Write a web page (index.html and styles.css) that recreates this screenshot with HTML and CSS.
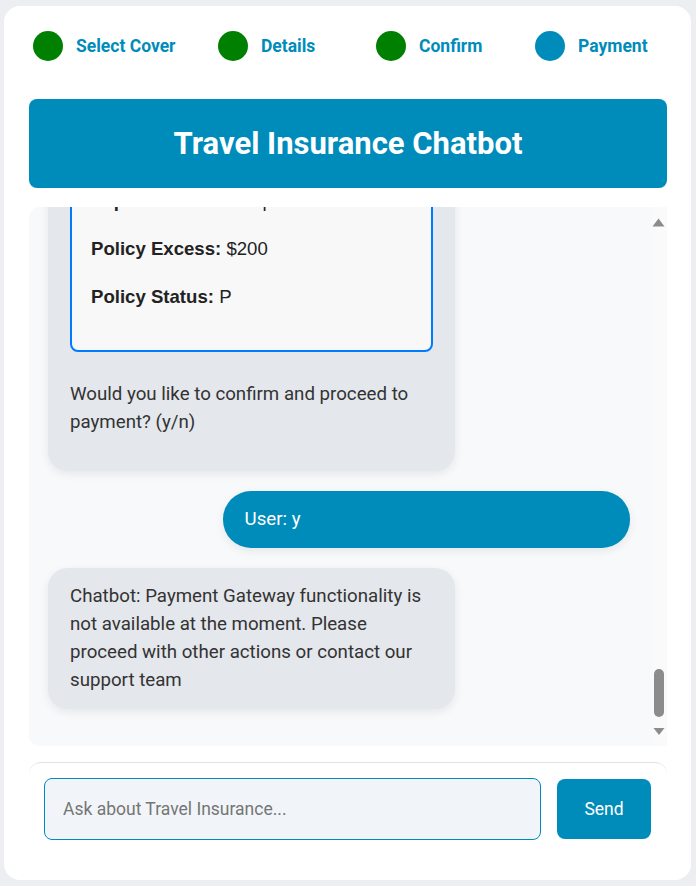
FILE: index.html
```html
<!DOCTYPE html>
<html lang="en">
<head>
<meta charset="utf-8">
<title>Travel Insurance Chatbot</title>
<link rel="stylesheet" href="styles.css">
</head>
<body>
<div class="card">
  <div class="steps">
    <div class="step"><span class="dot done"></span><span class="label">Select Cover</span></div>
    <div class="step"><span class="dot done"></span><span class="label">Details</span></div>
    <div class="step"><span class="dot done"></span><span class="label">Confirm</span></div>
    <div class="step"><span class="dot current"></span><span class="label">Payment</span></div>
  </div>
  <div class="header"><h1>Travel Insurance Chatbot</h1></div>
  <div class="chat">
    <div class="viewport">
      <div class="messages">
        <div class="msg bot">
          <div class="policy">
            <p><b>Trip Destination:</b> Japan</p>
            <p><b>Policy Excess:</b> $200</p>
            <p><b>Policy Status:</b> P</p>
          </div>
          <p class="question">Would you like to confirm and proceed to payment? (y/n)</p>
        </div>
        <div class="msg user">User: y</div>
        <div class="msg bot">Chatbot: Payment Gateway functionality is not available at the moment. Please proceed with other actions or contact our support team</div>
      </div>
    </div>
    <div class="scrollbar">
      <svg class="arrow" width="15" height="22" viewBox="0 0 15 22"><path d="M0.5 19.5 L12.5 19.5 L6.5 11.5 Z" fill="#8c8c8c"/></svg>
      <div class="track"><div class="thumb"></div></div>
      <svg class="arrow" width="15" height="24" viewBox="0 0 15 24"><path d="M1.5 6 L12.5 6 L7 13 Z" fill="#8c8c8c"/></svg>
    </div>
  </div>
  <div class="composer">
    <input class="ask" type="text" placeholder="Ask about Travel Insurance...">
    <button class="send" type="button">Send</button>
  </div>
</div>
</body>
</html>
```

FILE: styles.css
```css
* { box-sizing: border-box; }

html, body {
  margin: 0;
  height: 100%;
}

body {
  background: #eceef1;
  padding: 6px 5px 6px 4px;
  font-family: Roboto, "Noto Sans", sans-serif;
  color: #333;
}

.card {
  background: #fff;
  border-radius: 16px;
  height: 874px;
  padding: 25px 24px 0 25px;
  display: flex;
  flex-direction: column;
}

.steps {
  display: grid;
  grid-template-columns: 185px 158px 159px 1fr;
  padding-left: 4px;
  height: 30px;
}

.step {
  display: flex;
  align-items: center;
  gap: 13px;
}

.dot {
  width: 30px;
  height: 30px;
  border-radius: 50%;
  flex: none;
}

.dot.done { background: #008000; }
.dot.current { background: #008cba; }

.label {
  color: #008cba;
  font-weight: 700;
  font-size: 17.5px;
}

.header {
  margin-top: 38px;
  background: #008cba;
  border-radius: 8px;
  height: 89px;
  display: flex;
  align-items: center;
  justify-content: center;
}

.header h1 {
  margin: 0;
  color: #fff;
  font-size: 31px;
  font-weight: 700;
}

.chat {
  margin-top: 19px;
  height: 539px;
  background: #f8f9fb;
  border-radius: 10px 0 0 10px;
  display: flex;
  overflow: hidden;
}

.viewport {
  flex: 1;
  overflow: hidden;
  display: flex;
  flex-direction: column;
  justify-content: flex-end;
}

.messages {
  padding: 20px 22px 37px 19px;
  display: flex;
  flex-direction: column;
  gap: 20px;
}

.msg {
  width: 70%;
  padding: 14px 22px;
  border-radius: 20px;
  font-size: 18.7px;
  line-height: 28px;
  box-shadow: 0 3px 10px rgba(0, 0, 0, 0.08);
}

.msg.bot {
  background: #e4e7ec;
  align-self: flex-start;
  padding-bottom: 15px;
}

.msg.user {
  background: #008cba;
  color: #fff;
  align-self: flex-end;
  border-radius: 28px;
  padding-bottom: 15px;
}

.msg p { margin: 0; }

.msg .question {
  margin-top: 28px;
  margin-bottom: 20px;
}

.policy {
  border: 2px solid #007bff;
  border-radius: 8px;
  background: #f8f8f8;
  padding: 0 19px;
  font-family: "Liberation Sans", Arial, sans-serif;
  font-size: 18.6px;
  color: #222;
  display: flow-root;
}

.policy p {
  margin: 20px 0;
  line-height: 28px;
}

.policy p:last-child { margin-bottom: 39px; }

.scrollbar {
  width: 15px;
  flex: none;
  background: #fafafa;
  display: flex;
  flex-direction: column;
}

.arrow {
  display: block;
  flex: none;
}

.track {
  flex: 1;
  display: flex;
  flex-direction: column;
  justify-content: flex-end;
  padding-bottom: 5px;
}

.thumb {
  width: 10px;
  height: 48px;
  margin-left: 2px;
  border-radius: 5px;
  background: #8c8c8c;
}

.composer {
  margin-top: 16px;
  border-top: 1px solid #dfe1e5;
  border-radius: 12px 12px 0 0;
  padding: 15px 16px 0 15px;
  display: flex;
  gap: 16px;
  align-items: flex-start;
}

.ask {
  flex: 1;
  height: 62px;
  border: 1px solid #008cba;
  border-radius: 8px;
  background: #f1f5f9;
  padding: 0 18px;
  font-family: Roboto, "Noto Sans", sans-serif;
  font-size: 17.5px;
  color: #333;
}

.ask::placeholder { color: #757575; }

.send {
  margin-top: 1px;
  width: 94px;
  height: 60px;
  border: none;
  border-radius: 8px;
  background: #008cba;
  color: #fff;
  font-family: Roboto, "Noto Sans", sans-serif;
  font-size: 17.5px;
}
```
